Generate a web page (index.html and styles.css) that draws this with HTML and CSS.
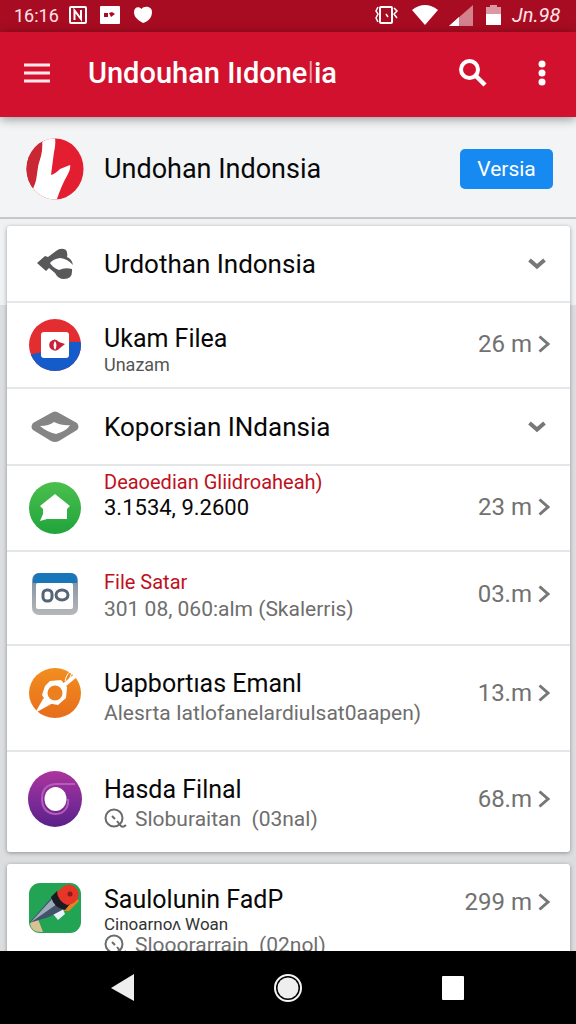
FILE: index.html
```html
<!DOCTYPE html>
<html lang="id">
<head>
<meta charset="utf-8">
<meta name="viewport" content="width=device-width, initial-scale=1">
<title>Undouhan Indonesia</title>
<link rel="stylesheet" href="styles.css">
</head>
<body>
<svg class="defs" aria-hidden="true">
  <symbol id="right" viewBox="0 0 12 18"><path d="M1.500 1.500L10 9L1.500 16.500" fill="none" stroke="#777" stroke-width="3"/></symbol>
  <symbol id="down" viewBox="0 0 18 12"><path d="M1.500 2L9 8.500L16.500 2" fill="none" stroke="#777" stroke-width="4"/></symbol>
  <symbol id="lens" viewBox="0 0 24 22"><g fill="none" stroke="#6b6b6b" stroke-width="2"><circle cx="10" cy="10" r="8.500"/><path d="M8 8l3 3M13 13l4 5q2 2 5-1" /></g></symbol>
</svg>

<div class="status">
  <span class="clock">16:16</span>
  <svg width="18" height="18" viewBox="0 0 18 18"><rect x="1" y="1" width="16" height="16" rx="1" fill="none" stroke="#fff" stroke-width="2"/><path d="M5.500 14V4.500L12 13V4" fill="none" stroke="#fff" stroke-width="2"/></svg>
  <svg width="20" height="18" viewBox="0 0 20 18"><rect width="20" height="18" rx="1" fill="#fff"/><path d="M4 7h4v4H4zM9 7l3-1 3 2-4 3z" fill="#a80c22"/></svg>
  <svg width="20" height="18" viewBox="0 0 20 18"><path d="M10 17C3 13 1 10 1 6C1 1 6 0 8.500 3C11-.5 19 0 19 6C19 11 16 15 10 17Z" fill="#fff"/></svg>
  <span class="space"></span>
  <svg width="24" height="20" viewBox="0 0 24 20"><g fill="none" stroke="#fff" stroke-width="1.500"><rect x="5" y="2" width="12" height="16" rx="1" stroke-width="2"/><path d="M3 2L1 6l2 3-2 4 2 4M19 3l3 3-3 3 3 4M11 9l2 3"/></g></svg>
  <svg class="wifi" width="26" height="20" viewBox="0 0 26 20"><path d="M0 5Q13-5 26 5L13 20Z" fill="#fff"/></svg>
  <svg width="24" height="21" viewBox="0 0 24 21"><path d="M24 0V21H0Z" fill="#d2818d"/><path d="M10 12V21H0Z" fill="#fff"/></svg>
  <svg class="battery" width="15" height="20" viewBox="0 0 15 20"><path d="M4 0h7v2h4v8H0V2h4z" fill="#dc98a2"/><path d="M0 9h15v11H0z" fill="#fff"/></svg>
  <span class="charge">Jn.98</span>
</div>

<header class="appbar">
  <button class="menu" aria-label="Menu"><svg width="28" height="22" viewBox="0 0 28 22"><path d="M1 3h26M1 11h26M1 19h26" stroke="#ffe8ec" stroke-width="3"/></svg></button>
  <h1>Undouhan Iıdone<span class="faint">l</span>ia</h1>
  <button aria-label="Cari"><svg width="30" height="30" viewBox="0 0 30 30"><circle cx="11.500" cy="11.500" r="8.500" fill="none" stroke="#fff" stroke-width="4"/><path d="M18 18L27 27" stroke="#fff" stroke-width="4.500"/></svg></button>
  <button class="more" aria-label="Lainnya"><svg width="8" height="26" viewBox="0 0 8 26"><g fill="#fff"><circle cx="4" cy="4" r="3.500"/><circle cx="4" cy="13" r="3.500"/><circle cx="4" cy="22" r="3.500"/></g></svg></button>
</header>

<main>
  <section class="profile">
    <span class="icon"><svg width="58" height="62" viewBox="0 0 58 62"><defs><clipPath id="disc"><ellipse cx="29" cy="31" rx="28.500" ry="30.500"/></clipPath></defs><g clip-path="url(#disc)"><path d="M0 0h58v62H0z" fill="#e31e30"/><path d="M0 0h18L8 54H0z" fill="#c92734"/><path d="M16 0H29Q30 6 28 14L25 37Q29 36 34 31L44 27Q45 30 42 36Q35 48 30 64H15L6 52Q10 46 11 36Q12 26 15 18Q17 10 16 0Z" fill="#fff"/></g></svg></span>
    <h2 class="title">Undohan Indonsia</h2>
    <button class="version">Versia</button>
  </section>

  <div class="card">
    <button class="row group">
      <span class="icon"><svg width="38" height="32" viewBox="0 0 38 32"><path d="M1 15L9 8L12 9L20 3Q25-1 30 2Q32 5 31 9Q36 11 37 17Q32 11 24 10Q17 11 14 15Q17 20 23 22Q29 19 36 21Q37 31 28 31Q22 31 19 25L13 20L10 23Z" fill="#59595b"/></svg></span>
      <span class="title">Urdothan Indonsia</span>
      <svg class="down" width="18" height="12"><use href="#down"/></svg>
    </button>
    <a class="row compact" href="#ukam">
      <span class="icon"><svg width="52" height="52" viewBox="0 0 52 52"><defs><clipPath id="round"><circle cx="26" cy="26" r="26"/></clipPath></defs><g clip-path="url(#round)"><path d="M0 0h52v52H0z" fill="#e32e31"/><path d="M0 36L13 33L38 23H52V52H0Z" fill="#165bca"/></g><rect x="12" y="13" width="28" height="26" rx="3" fill="#fff"/><path d="M21 23Q26 18 30 23L36 25L31 29Q27 34 22 30Q19 27 21 23Z" fill="#c91f37"/><path d="M26 22Q23 26 26 31Q29 26 26 22Z" fill="#fff"/></svg></span>
      <span class="text low"><span class="title">Ukam Filea</span><span class="small">Unazam</span></span>
      <span class="meta">26 m</span><svg class="right" width="12" height="18"><use href="#right"/></svg>
    </a>
    <button class="row group">
      <span class="icon"><svg width="48" height="32" viewBox="0 0 48 32"><path d="M20 2Q24-1 28 2L46 12Q49 16 46 19L28 30Q24 32 20 30L2 19Q-1 16 2 12Z" fill="#858585"/><path d="M9 15Q18 15 23 11Q32 15 39 14Q36 20 25 23Q16 21 9 15Z" fill="#fff"/></svg></span>
      <span class="title">Koporsian INdansia</span>
      <svg class="down" width="18" height="12"><use href="#down"/></svg>
    </button>
    <a class="row compact" href="#lokasi">
      <span class="icon"><svg width="52" height="52" viewBox="0 0 52 52"><defs><linearGradient id="green" x2="0" y2="1"><stop stop-color="#4bbf4d"/><stop offset="1" stop-color="#20a43c"/></linearGradient></defs><circle cx="26" cy="26" r="26" fill="url(#green)"/><path d="M26 12L41 24L38 27V37H18L11 39L14 32V27L11 24Z" fill="#fff"/></svg></span>
      <span class="text high"><span class="label">Deaoedian Gliidroaheah)</span><span class="value">3.1534, 9.2600</span></span>
      <span class="meta">23 m</span><svg class="right" width="12" height="18"><use href="#right"/></svg>
    </a>
    <a class="row medium" href="#satar">
      <span class="icon"><svg width="46" height="42" viewBox="0 0 46 42"><defs><linearGradient id="frame" x2="0" y2="1"><stop offset=".3" stop-color="#8c9aa8"/><stop offset="1" stop-color="#b7b7b9"/></linearGradient></defs><rect width="46" height="42" rx="7" fill="url(#frame)"/><path d="M1 10V7Q1 0 8 0H38Q45 0 45 7V10Z" fill="#1976b9"/><rect x="4" y="10" width="37" height="26" rx="2" fill="#fff"/><rect x="11" y="17" width="9" height="11" rx="4" fill="none" stroke="#566576" stroke-width="3"/><ellipse cx="30" cy="22" rx="6" ry="5" fill="none" stroke="#566576" stroke-width="3"/></svg></span>
      <span class="text low-slight"><span class="label">File Satar</span><span class="sub">301 08, 060:alm (Skalerris)</span></span>
      <span class="meta">03.m</span><svg class="right" width="12" height="18"><use href="#right"/></svg>
    </a>
    <a class="row tall" href="#emanl">
      <span class="icon"><svg width="52" height="50" viewBox="0 0 52 50"><defs><linearGradient id="orange" x2="0" y2="1"><stop stop-color="#f28e20"/><stop offset="1" stop-color="#e66e1b"/></linearGradient></defs><ellipse cx="26" cy="25" rx="26" ry="25" fill="url(#orange)"/><path d="M34 18L51 4" stroke="#fff" stroke-width="4"/><path d="M6 45L14 31L20 27L24 35Z" fill="#fff"/><path d="M21 13L32 12L38 19L37 30L29 37L18 35L13 27L16 18Z" fill="#fff"/><circle cx="26" cy="25" r="7.500" fill="#ed801e"/><path d="M36 13Q38 4 44 2L40 12" fill="none" stroke="#fff"/></svg></span>
      <span class="text low"><span class="title">Uapbortıas Emanl</span><span class="sub">Alesrta Iatlofanelardiulsat0aapen)</span></span>
      <span class="meta">13.m</span><svg class="right" width="12" height="18"><use href="#right"/></svg>
    </a>
    <a class="row large" href="#filnal">
      <span class="icon"><svg width="54" height="56" viewBox="0 0 54 56"><defs><linearGradient id="purple" x2="0" y2="1"><stop stop-color="#ac359c"/><stop offset=".5" stop-color="#812b99"/><stop offset="1" stop-color="#5a2189"/></linearGradient></defs><ellipse cx="27" cy="28" rx="27" ry="28" fill="url(#purple)"/><path d="M47 13H29C17 13 14 20 14 28C14 38 20 43 28 43C36 43 41 36 40 28" fill="none" stroke="#b45cb8" stroke-width="2"/><ellipse cx="27.500" cy="28" rx="11" ry="12" fill="#fff"/></svg></span>
      <span class="text low"><span class="title">Hasda Filnal</span><span class="sub"><svg class="lens" width="24" height="22"><use href="#lens"/></svg>Sloburaitan &nbsp;(03nal)</span></span>
      <span class="meta">68.m</span><svg class="right" width="12" height="18"><use href="#right"/></svg>
    </a>
  </div>

  <div class="card">
    <a class="row last" href="#fadp">
      <span class="icon"><svg width="52" height="50" viewBox="0 0 52 50"><rect width="52" height="50" rx="11" fill="#22a454"/><path d="M1 40L9 36L14 49Q2 50 1 40Z" fill="#d8c293"/><path d="M34 28L46 14L50 18L40 28Z" fill="#e68323"/><path d="M24 31L32 22L36 31L29 37Z" fill="#e8f2fb"/><path d="M0 40L23 14L35 26L20 34Z" fill="#42526a"/><path d="M1 40L23 16L28 21Z" fill="#9caabc"/><path d="M22 14L28 8L41 21L36 27Q25 25 22 14Z" fill="#191c22"/><path d="M28 9L35 3Q44-1 49 8Q52 16 43 21L38 22Q29 18 28 9Z" fill="#e73627"/><circle cx="41" cy="11" r="2.500" fill="#861d21"/></svg></span>
      <span class="text"><span class="title">Saulolunin FadP</span><span class="tiny">Cinoarnoʌ Woan</span><span class="sub"><svg class="lens" width="24" height="22"><use href="#lens"/></svg>Slooorarrain &nbsp;(02nol)</span></span>
      <span class="meta">299 m</span><svg class="right" width="12" height="18"><use href="#right"/></svg>
    </a>
  </div>
</main>

<nav class="system">
  <button aria-label="Kembali"><svg width="24" height="28" viewBox="0 0 24 28"><path d="M0 14L23 0V27Z" fill="#eee"/></svg></button>
  <button aria-label="Beranda"><svg width="28" height="28" viewBox="0 0 28 28"><circle cx="14" cy="14" r="13" fill="none" stroke="#f4f4f4" stroke-width="2"/><circle cx="14" cy="14" r="10.500" fill="#eee"/></svg></button>
  <button aria-label="Terkini"><svg width="24" height="24" viewBox="0 0 24 24"><rect x="1" width="22" height="24" rx="1" fill="#fff"/></svg></button>
</nav>
</body>
</html>
```

FILE: styles.css
```css
* { box-sizing: border-box; }

body {
  margin: 0;
  height: 100vh;
  display: flex;
  flex-direction: column;
  overflow: hidden;
  font-family: Roboto, "Liberation Sans", sans-serif;
  color: #080808;
  background: #dcdddf;
}

button {
  font: inherit;
  color: inherit;
  border: 0;
  padding: 0;
  background: none;
}

a { color: inherit; text-decoration: none; }
h1, h2 { margin: 0; }
svg { display: block; flex: none; }
.defs { position: absolute; width: 0; height: 0; }
.space { flex: 1; }

.status {
  flex: none;
  height: 32px;
  display: flex;
  align-items: center;
  gap: 13px;
  padding: 0 10px 2px 14px;
  background: #a80c22;
  color: #ffe3e7;
  font-size: 18px;
}

.clock { width: 42px; }
.wifi { margin-right: -2px; }
.battery { margin-right: -2px; }
.charge { width: 54px; font-size: 20px; font-style: italic; }

.appbar {
  flex: none;
  height: 85px;
  display: flex;
  align-items: center;
  padding: 0 30px 3px 23px;
  background: #d2112e;
  color: #fff;
  box-shadow: 0 2px 10px rgba(0, 0, 0, .4);
  z-index: 1;
}

.appbar h1 {
  flex: 1;
  margin-left: 37px;
  font-size: 29px;
  font-weight: 500;
  white-space: nowrap;
}

.faint { font-weight: 300; opacity: .6; }
.more { margin-left: 50px; }

main {
  flex: 1;
  min-height: 0;
  overflow: hidden;
  background: linear-gradient(#f0f1f2 188px, #dcdddf 188px);
}

.profile {
  height: 102px;
  display: flex;
  align-items: center;
  gap: 20px;
  padding: 3px 23px 0 26px;
  background: #f3f4f5;
  border-bottom: 2px solid #c6c7c9;
}

.icon {
  flex: none;
  width: 58px;
  display: flex;
  justify-content: center;
}

.title {
  flex: 1;
  font-size: 27px;
  line-height: 30px;
  font-weight: 400;
  text-align: left;
  white-space: nowrap;
}

.version {
  width: 93px;
  height: 40px;
  border-radius: 5px;
  background: #178af2;
  color: #fff;
  font-size: 21px;
}

.card {
  margin: 7px 6px 12px 7px;
  background: #fff;
  border-radius: 3px;
  box-shadow: 0 1px 4px rgba(0, 0, 0, .35);
}

.row {
  width: 100%;
  display: flex;
  align-items: center;
  padding: 0 20px 0 19px;
  border-bottom: 2px solid #e5e6e7;
}

.row:last-child { border-bottom: 0; }
.row > .title, .text { margin-left: 20px; }

.group { height: 77px; }
.group .title { font-size: 26px; }
.compact { height: 86px; }
.medium { height: 94px; padding-bottom: 8px; }
.tall { height: 106px; padding-bottom: 10px; }
.large { height: 100px; padding-bottom: 6px; }
.last { height: 118px; align-items: flex-start; padding-top: 19px; }

.text {
  flex: 1;
  min-width: 0;
  display: flex;
  flex-direction: column;
  white-space: nowrap;
}

.text .title { flex: none; font-size: 25px; }
.low { padding-top: 10px; }
.low-slight { padding-top: 4px; }
.high { padding-bottom: 26px; }
.last .text { padding-top: 2px; }

.label { font-size: 20px; line-height: 26px; color: #c0101c; }
.value { font-size: 22px; line-height: 26px; }
.small { font-size: 18px; line-height: 22px; color: #555; }
.tiny { font-size: 17px; line-height: 18px; color: #333; }

.sub {
  display: flex;
  align-items: center;
  gap: 7px;
  font-size: 21px;
  line-height: 28px;
  color: #6e6e6e;
}

.last .sub { line-height: 24px; }

.meta {
  font-size: 24px;
  line-height: 38px;
  color: #717171;
  white-space: nowrap;
}

.compact .meta, .compact .right { margin-bottom: 2px; }

.right { margin-left: 6px; }
.last .right { margin-top: 10px; }
.down { margin-right: 4px; }

.system {
  flex: none;
  height: 73px;
  display: flex;
  justify-content: center;
  align-items: center;
  gap: 139px;
  background: #000;
}
```
